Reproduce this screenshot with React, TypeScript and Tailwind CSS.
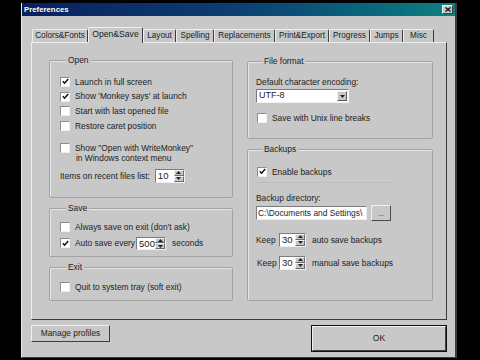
import React from "react";

const Check = ({ on }: { on?: boolean }) => (
  <span className="w-[10px] h-[10px] shrink-0 bg-white border border-t-[#8c8c8c] border-l-[#8c8c8c] border-r-[#efefef] border-b-[#efefef] flex items-center justify-center">
    {on && (
      <svg width="7" height="7" viewBox="0 0 7 7">
        <path d="M0.8 3.2 L2.6 5.2 L6.2 1" stroke="#111" strokeWidth="1.5" fill="none" />
      </svg>
    )}
  </span>
);

const Row = ({ on, label, cls = "" }: { on?: boolean; label: string; cls?: string }) => (
  <div className={`flex items-center gap-[5px] h-[14.7px] ${cls}`}>
    <Check on={on} />
    <span className="whitespace-nowrap">{label}</span>
  </div>
);

const Spin = ({ value, field, h = "h-[14px]" }: { value: string; field: string; h?: string }) => (
  <div className={`flex ${h} bg-white border border-t-[#7c7c7c] border-l-[#7c7c7c] border-r-[#f0f0f0] border-b-[#f0f0f0]`}>
    <div className={`${field} overflow-hidden whitespace-nowrap pl-[2px] leading-none flex items-center text-[9.5px]`}>
      {value}
    </div>
    <div className="w-[10px] flex flex-col bg-[#c8c8c8]">
      <div className="flex-1 flex items-center justify-center border border-t-[#f2f2f2] border-l-[#f2f2f2] border-r-[#6a6a6a] border-b-[#6a6a6a]">
        <svg width="5" height="3" viewBox="0 0 5 3"><path d="M0 3 L2.5 0 L5 3 Z" fill="#222" /></svg>
      </div>
      <div className="flex-1 flex items-center justify-center border border-t-[#f2f2f2] border-l-[#f2f2f2] border-r-[#6a6a6a] border-b-[#6a6a6a]">
        <svg width="5" height="3" viewBox="0 0 5 3"><path d="M0 0 L2.5 3 L5 0 Z" fill="#222" /></svg>
      </div>
    </div>
  </div>
);

const Group = ({ title, cls, children }: { title: string; cls: string; children?: React.ReactNode }) => (
  <div className={`border border-[#a2a2a2] rounded-[2px] shadow-[inset_1px_1px_0_#e6e6e6] flex flex-col ${cls}`}>
    <div className="-mt-[6px] ml-[6px] px-[2px] w-fit bg-[#c8c8c8] leading-[11px]">{title}</div>
    {children}
  </div>
);

const tabs = [
  { name: "Colors&Fonts", w: "w-[56px]" },
  { name: "Open&Save", w: "w-[55px]", active: true },
  { name: "Layout", w: "w-[33px]" },
  { name: "Spelling", w: "w-[38px]" },
  { name: "Replacements", w: "w-[61px]" },
  { name: "Print&Export", w: "w-[54px]" },
  { name: "Progress", w: "w-[41px]" },
  { name: "Jumps", w: "w-[33px]" },
  { name: "Misc", w: "w-[31px]" },
];

export default function App() {
  return (
    <div className="w-[480px] h-[360px] bg-black pl-[21px] pt-[3px] overflow-hidden font-['Liberation_Sans',Arial,sans-serif] text-[8.4px] text-[#1c1c1c]">
      <div className="w-[436px] h-[355px] bg-[#c8c8c8] border-l border-l-[#e4e4e4] border-r-2 border-r-[#3c3c3c] border-b border-b-[#3c3c3c] flex flex-col">
        {/* Title bar */}
        <div className="h-[13px] shrink-0 bg-gradient-to-r from-[#0a1f60] via-[#0c3f72] to-[#0e8080] flex items-center justify-between pl-[2px] pr-[2px]">
          <span className="text-white font-bold text-[7.8px] leading-none">Preferences</span>
          <div className="w-[11px] h-[9px] bg-[#c8c8c8] border border-t-[#f4f4f4] border-l-[#f4f4f4] border-r-[#404040] border-b-[#404040] flex items-center justify-center">
            <svg width="6" height="5" viewBox="0 0 6 5">
              <path d="M0.5 0.5 L5.5 4.5 M5.5 0.5 L0.5 4.5" stroke="#111" strokeWidth="1.3" />
            </svg>
          </div>
        </div>

        <div className="flex flex-col pl-[9px] pr-[8px] pt-[11px]">
          {/* Tabs */}
          <div className="flex items-end h-[15px] pl-[1px] relative z-10">
            {tabs.map((t) =>
              t.active ? (
                <div
                  key={t.name}
                  className={`${t.w} h-[16px] -mb-[1px] bg-[#c8c8c8] border-t border-l border-t-[#f0f0f0] border-l-[#f0f0f0] border-r border-r-[#3c3c3c] rounded-t-[2px] flex items-center justify-center pb-[2px] whitespace-nowrap text-[8.6px]`}
                >
                  {t.name}
                </div>
              ) : (
                <div
                  key={t.name}
                  className={`${t.w} h-[13px] border-t border-l border-t-[#eeeeee] border-l-[#eeeeee] border-r border-r-[#3c3c3c] rounded-t-[2px] flex items-center justify-center whitespace-nowrap text-[8.2px]`}
                >
                  {t.name}
                </div>
              )
            )}
          </div>

          {/* Panel */}
          <div className="w-[416px] h-[278px] border border-t-[#eeeeee] border-l-[#eeeeee] border-r-[#3c3c3c] border-b-[#3c3c3c] flex gap-[14px] pl-[17px] pt-[17px]">
            <div className="w-[184px] flex flex-col gap-[10px]">
              <Group title="Open" cls="h-[138px] pl-[10px]">
                <div className="mt-[8.6px] flex flex-col">
                  <Row on label="Launch in full screen" />
                  <Row on label="Show 'Monkey says' at launch" />
                  <Row label="Start with last opened file" />
                  <Row label="Restore caret position" />
                </div>
                <div className="mt-[9.5px] flex items-start gap-[5px]">
                  <Check />
                  <div className="leading-[10px]">
                    <div className="whitespace-nowrap">Show "Open with WriteMonkey"</div>
                    <div className="whitespace-nowrap pl-[1px]">in Windows context menu</div>
                  </div>
                </div>
                <div className="mt-[6px] h-[14px] flex items-center gap-[5px]">
                  <span className="whitespace-nowrap">Items on recent files list:</span>
                  <Spin value="10" field="w-[18px]" />
                </div>
              </Group>

              <Group title="Save" cls="h-[49px] pl-[10px]">
                <Row label="Always save on exit (don't ask)" cls="mt-[5.6px]" />
                <div className="mt-[1.5px] h-[15px] flex items-center">
                  <Check on />
                  <span className="ml-[5px] whitespace-nowrap">Auto save every</span>
                  <div className="ml-[1px]">
                    <Spin value="500" field="w-[18px]" h="h-[13px]" />
                  </div>
                  <span className="ml-[6px]">seconds</span>
                </div>
              </Group>

              <Group title="Exit" cls="h-[34px] pl-[10px]">
                <Row label="Quit to system tray (soft exit)" cls="mt-[6.6px]" />
              </Group>
            </div>

            <div className="w-[186px] flex flex-col gap-[10px] mt-[1px]">
              <Group title="File format" cls="h-[78px] pl-[8px]">
                <div className="mt-[10px] leading-[10px]">Default character encoding:</div>
                <div className="mt-[2px] w-[93px] h-[14px] bg-white border border-t-[#7c7c7c] border-l-[#7c7c7c] border-r-[#f0f0f0] border-b-[#f0f0f0] flex">
                  <div className="flex-1 pl-[2px] flex items-center text-[9px]">UTF-8</div>
                  <div className="w-[10px] m-[1px] bg-[#c8c8c8] border border-t-[#f2f2f2] border-l-[#f2f2f2] border-r-[#5a5a5a] border-b-[#5a5a5a] flex items-center justify-center">
                    <svg width="5" height="3" viewBox="0 0 5 3"><path d="M0 0 L2.5 3 L5 0 Z" fill="#222" /></svg>
                  </div>
                </div>
                <Row label="Save with Unix line breaks" cls="mt-[7.6px] ml-[1px]" />
              </Group>

              <Group title="Backups" cls="h-[152px] pl-[8px]">
                <Row on label="Enable backups" cls="mt-[9.6px] ml-[1px]" />
                <div className="mt-[2.6px] w-[136px] h-px bg-[#bcbcbc]" />
                <div className="mt-[10px] leading-[10px]">Backup directory:</div>
                <div className="mt-[2px] flex items-center gap-[4px]">
                  <div className="w-[111px] h-[14px] bg-white border border-t-[#7c7c7c] border-l-[#7c7c7c] border-r-[#f0f0f0] border-b-[#f0f0f0] overflow-hidden whitespace-nowrap pl-[1px] flex items-center text-[8.4px]">
                    C:\Documents and Settings\
                  </div>
                  <div className="w-[20px] h-[16px] border border-t-[#f2f2f2] border-l-[#f2f2f2] border-r-[#4a4a4a] border-b-[#4a4a4a] flex items-center justify-center text-[7px] pt-[2px]">
                    ...
                  </div>
                </div>
                <div className="mt-[11.5px] h-[15px] flex items-center">
                  <span className="w-[23px]">Keep</span>
                  <Spin value="30" field="w-[15px]" />
                  <span className="ml-[6px]">auto save backups</span>
                </div>
                <div className="mt-[8px] h-[15px] flex items-center">
                  <span className="w-[23px] pl-[1px]">Keep</span>
                  <Spin value="30" field="w-[15px]" />
                  <span className="ml-[6px]">manual save backups</span>
                </div>
              </Group>
            </div>
          </div>

          {/* Bottom buttons */}
          <div className="mt-[5px] flex justify-between items-start">
            <div className="w-[79px] h-[17px] border border-t-[#f2f2f2] border-l-[#f2f2f2] border-r-[#404040] border-b-[#404040] flex items-center justify-center whitespace-nowrap">
              Manage profiles
            </div>
            <div className="w-[136px] h-[27px] border border-[#111] flex">
              <div className="flex-1 border border-t-[#f2f2f2] border-l-[#f2f2f2] border-r-[#404040] border-b-[#404040] flex items-center justify-center text-[8.6px]">
                OK
              </div>
            </div>
          </div>
        </div>
      </div>
    </div>
  );
}
